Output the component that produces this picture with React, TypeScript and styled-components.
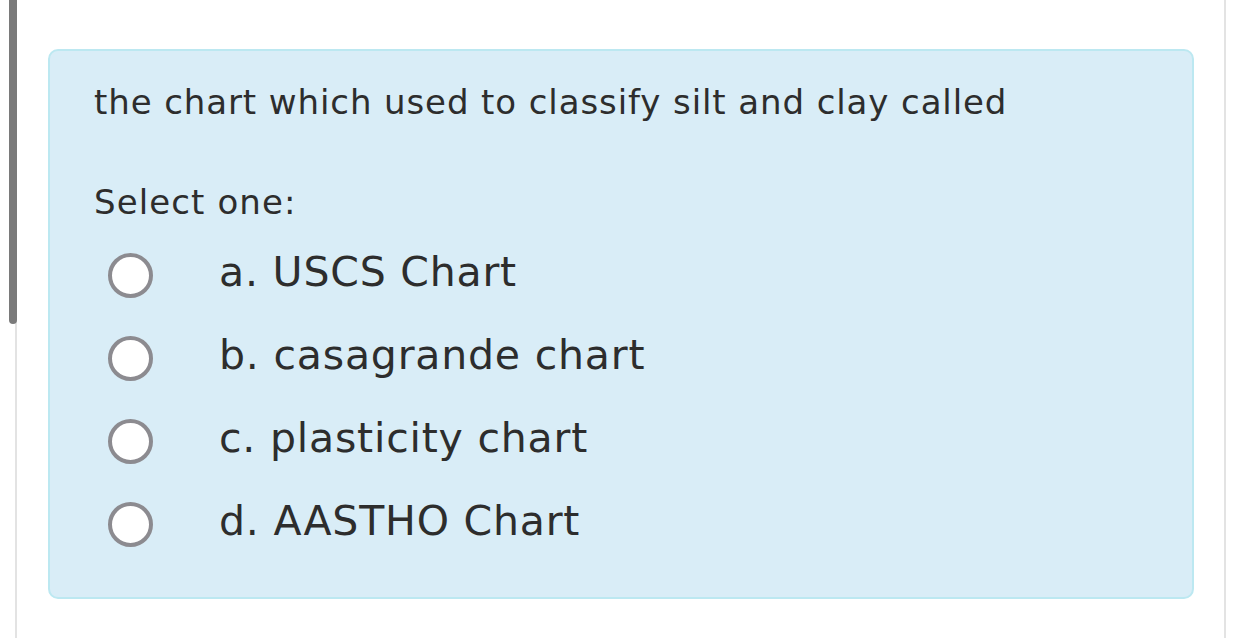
import React from "react";
import styled, { createGlobalStyle } from "styled-components";

const Global = createGlobalStyle`
  html, body { margin: 0; padding: 0; background: #ffffff; }
  body { font-family: "DejaVu Sans", Verdana, sans-serif; color: #2d2d2d; }
`;

const Page = styled.div`
  position: relative;
  width: 1242px;
  height: 638px;
  overflow: hidden;
  padding-left: 15px;
  box-sizing: border-box;
`;

const ScrollThumb = styled.div`
  position: absolute;
  left: 9px;
  top: 0;
  width: 8px;
  height: 324px;
  background: #7a7a7a;
  border-radius: 0 0 4px 4px;
`;

const Column = styled.div`
  width: 1211px;
  height: 638px;
  box-sizing: border-box;
  border-left: 2px solid #e3e3e3;
  border-right: 2px solid #e3e3e3;
  padding: 49px 30px 0 31px;
`;

const Panel = styled.div`
  box-sizing: border-box;
  height: 550px;
  background: #d9edf7;
  border: 2px solid #bce8f1;
  border-radius: 10px;
  padding: 29px 44px 0 44px;
`;

const Question = styled.div`
  font-size: 34px;
  letter-spacing: 0.9px;
  line-height: 44px;
  margin: 0;
`;

const Prompt = styled.div`
  font-size: 34px;
  letter-spacing: 1.1px;
  line-height: 44px;
  margin-top: 56px;
`;

const Options = styled.div`
  display: flex;
  flex-direction: column;
  margin-top: 10px;
`;

const Option = styled.label`
  display: flex;
  align-items: center;
  height: 83px;
  padding-left: 14px;
`;

const Radio = styled.span`
  width: 45px;
  height: 45px;
  box-sizing: border-box;
  border-radius: 50%;
  border: 4px solid #8c8b90;
  background: #ffffff;
  flex: 0 0 auto;
`;

const OptionText = styled.span`
  font-size: 41px;
  letter-spacing: 0.8px;
  margin-left: 66px;
  line-height: 44px;
  position: relative;
  top: -4px;
`;

const options = ["a. USCS Chart", "b. casagrande chart", "c. plasticity chart", "d. AASTHO Chart"];

export default function App() {
  return (
    <>
      <Global />
      <Page>
        <ScrollThumb />
        <Column>
          <Panel>
            <Question>the chart which used to classify silt and clay called</Question>
            <Prompt>Select one:</Prompt>
            <Options>
              {options.map((o) => (
                <Option key={o}>
                  <Radio />
                  <OptionText>{o}</OptionText>
                </Option>
              ))}
            </Options>
          </Panel>
        </Column>
      </Page>
    </>
  );
}
